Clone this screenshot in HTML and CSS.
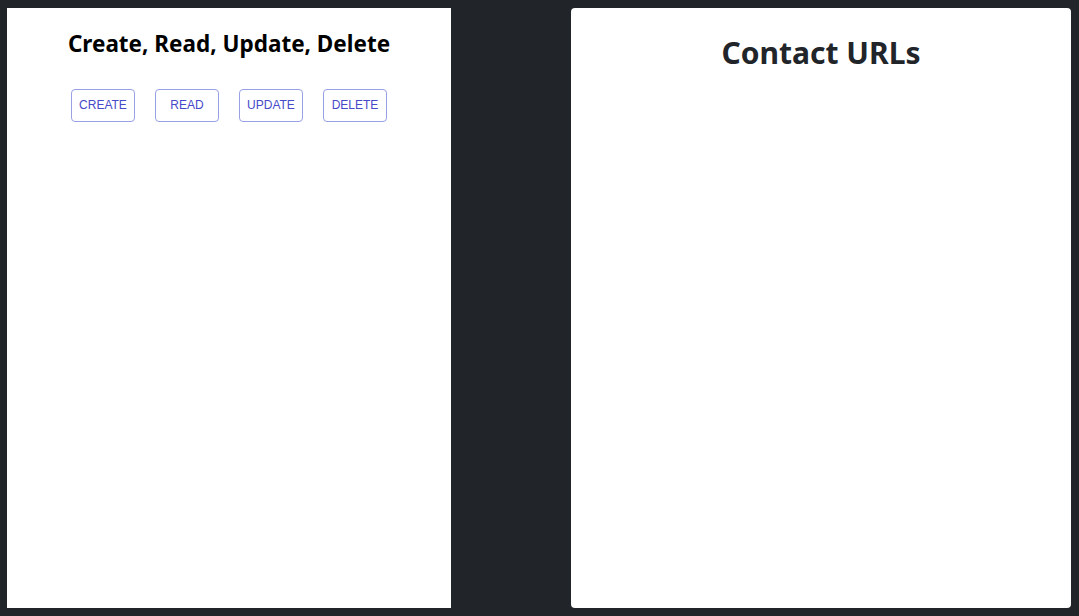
FILE: index.html
```html
<!DOCTYPE html>
<html>
<head>
<meta charset="utf-8">
<link rel="stylesheet" href="styles.css">
</head>
<body>
<div class="page">
  <section class="card crud">
    <h4 class="crud-title">Create, Read, Update, Delete</h4>
    <div class="actions">
      <button class="btn">CREATE</button>
      <button class="btn">READ</button>
      <button class="btn">UPDATE</button>
      <button class="btn">DELETE</button>
    </div>
  </section>
  <section class="card contacts">
    <h2 class="contacts-title">Contact URLs</h2>
  </section>
</div>
</body>
</html>
```
FILE: styles.css
```css
html, body {
  margin: 0;
  padding: 0;
  background: #212529;
  height: 100%;
}
.page {
  display: flex;
  gap: 120px;
  padding: 8px 8px 8px 7px;
  height: 616px;
  box-sizing: border-box;
}
.card {
  background: #fff;
  height: 600px;
  box-sizing: border-box;
}
.crud {
  width: 444px;
  padding-top: 22px;
}
.contacts {
  width: 500px;
  border-radius: 4px;
  padding-top: 26px;
}
.crud-title {
  margin: 0;
  font-family: "Noto Sans", "Open Sans", sans-serif;
  font-weight: 700;
  font-size: 22.5px;
  line-height: 28px;
  color: #000;
  text-align: center;
}
.actions {
  display: flex;
  justify-content: center;
  gap: 20px;
  margin-top: 31px;
}
.btn {
  width: 64px;
  height: 33px;
  padding: 0 0 2px 0;
  background: #fff;
  border: 1px solid #97a1e4;
  border-radius: 4px;
  color: #4649c8;
  font-family: "Liberation Sans", Arial, sans-serif;
  font-size: 12px;
  cursor: pointer;
}
.contacts-title {
  margin: 0;
  font-family: "Noto Sans", "Open Sans", sans-serif;
  font-weight: 700;
  font-size: 30px;
  line-height: 38px;
  color: #212529;
  text-align: center;
}
```
